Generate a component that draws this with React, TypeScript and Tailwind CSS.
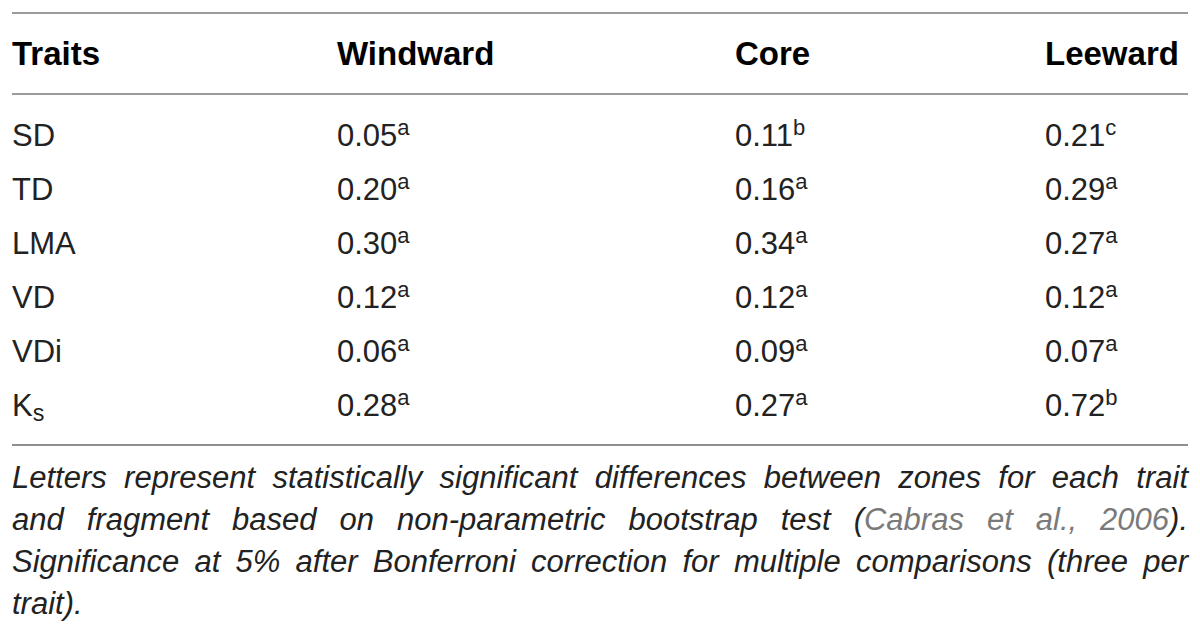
type Cell = [string, string];

const rows: { trait: React.ReactNode; vals: Cell[] }[] = [
    { trait: "SD", vals: [["0.05", "a"], ["0.11", "b"], ["0.21", "c"]] },
    { trait: "TD", vals: [["0.20", "a"], ["0.16", "a"], ["0.29", "a"]] },
    { trait: "LMA", vals: [["0.30", "a"], ["0.34", "a"], ["0.27", "a"]] },
    { trait: "VD", vals: [["0.12", "a"], ["0.12", "a"], ["0.12", "a"]] },
    { trait: "VDi", vals: [["0.06", "a"], ["0.09", "a"], ["0.07", "a"]] },
    {
        trait: (
            <>
                K<sub>s</sub>
            </>
        ),
        vals: [["0.28", "a"], ["0.27", "a"], ["0.72", "b"]],
    },
];

const cols = "grid grid-cols-[325px_398px_310px_1fr]";

const Value: React.FC<{ cell: Cell }> = ({ cell }) => (
    <span>
        {cell[0]}
        <sup className="text-[22px] -top-[11px]">{cell[1]}</sup>
    </span>
);

const App: React.FC = () => {
    return (
        <div className="min-h-[635px] bg-white px-[12px] pt-[12px] font-['Liberation_Sans',Arial,sans-serif] text-[#222]">
            <div className="h-[2px] bg-[#9b9b9b]" />
            <div className={`${cols} h-[79px] items-center text-[33px] font-bold text-black`}>
                <div>Traits</div>
                <div>Windward</div>
                <div>Core</div>
                <div>Leeward</div>
            </div>
            <div className="h-[2px] bg-[#9b9b9b]" />

            <div className="pt-[13px] pb-[12px] text-[31px]">
                {rows.map((row, i) => (
                    <div key={i} className={`${cols} h-[54px] items-center leading-none`}>
                        <div>{row.trait}</div>
                        {row.vals.map((v, j) => (
                            <div key={j}>
                                <Value cell={v} />
                            </div>
                        ))}
                    </div>
                ))}
            </div>
            <div className="h-[2px] bg-[#8f8f8f]" />

            {/* table footnote */}
            <div className="mt-[11px] text-[31px] italic leading-[42px] text-[#222]">
                <div className="text-justify [text-align-last:justify]">
                    Letters represent statistically significant differences between zones for each trait
                </div>
                <div className="text-justify [text-align-last:justify]">
                    and fragment based on non-parametric bootstrap test (
                    <span className="text-[#7a7a7a]">Cabras et al., 2006</span>).
                </div>
                <div className="text-justify [text-align-last:justify]">
                    Significance at 5% after Bonferroni correction for multiple comparisons (three per
                </div>
                <div>trait).</div>
            </div>
        </div>
    );
};

export default App;
